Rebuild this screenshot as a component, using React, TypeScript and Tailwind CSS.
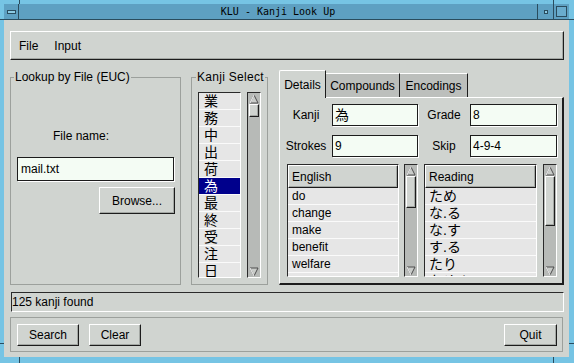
import React from "react";

const sans = "font-['Liberation_Sans','Noto_Sans_CJK_JP',sans-serif]";
const raised =
  "border border-t-white border-l-white border-r-[#1c1c1c] border-b-[#1c1c1c] shadow-[inset_-1px_-1px_0_#a3a7a3]";
const sunken = "border border-t-[#2a2a2a] border-l-[#2a2a2a] border-r-white border-b-white";
const field = "border border-[#1c1c1c] bg-[#f4fcf4] shadow-[1px_1px_0_#ffffff]";
const etched = "border border-[#9ca09c]";

const kanjiList = ["業", "務", "中", "出", "荷", "為", "最", "終", "受", "注", "日"];
const english = ["do", "change", "make", "benefit", "welfare"];
const readings = ["ため", "な.る", "な.す", "す.る", "たり", "ため.に"];

function Arrow({ down }: { down?: boolean }) {
  return (
    <div className="h-[11px] flex items-center justify-center shrink-0">
      <svg width="10" height="10" viewBox="0 0 10 10">
        <polygon
          points={down ? "1,1 9,1 5,9" : "5,1 9,9 1,9"}
          fill="#c9ccc9"
          stroke="#4c4c4c"
          strokeWidth="1"
        />
        <line x1={down ? 1 : 5} y1={1} x2={down ? 5 : 1} y2={9} stroke="#ffffff" strokeWidth="1" />
      </svg>
    </div>
  );
}

function Scrollbar({ thumb }: { thumb: string }) {
  return (
    <div className={`w-[14px] h-full flex flex-col bg-[#b7bab7] ${sunken}`}>
      <Arrow />
      <div className={`${thumb} mx-[1px] shrink-0 bg-[#d0d4d0] ${raised}`} />
      <div className="flex-1" />
      <Arrow down />
    </div>
  );
}

function ListBox({ title, rows, jp }: { title: string; rows: string[]; jp?: boolean }) {
  return (
    <div className={`h-full flex flex-col overflow-hidden bg-[#e6e6e6] ${sunken}`}>
      <div className={`h-[23px] shrink-0 bg-[#d0d4d0] flex items-center pl-[3px] text-[12px] ${raised}`}>{title}</div>
      {rows.map((r, i) => (
        <div
          key={i}
          className={`h-[17px] shrink-0 border-b border-[#fafafa] pl-[4px] flex items-center ${
            jp ? "text-[14px] leading-[17px]" : "text-[12px]"
          }`}
        >
          {r}
        </div>
      ))}
    </div>
  );
}

function Button({ label, w }: { label: string; w: string }) {
  return (
    <div className={`${w} h-[22px] bg-[#d0d4d0] flex items-center justify-center text-[12px] ${raised}`}>
      {label}
    </div>
  );
}

export default function App() {
  return (
    <div
      className={`relative w-[574px] h-[363px] bg-[#76c4e4] pt-[4px] pl-[4px] pr-[5px] pb-[6px] flex flex-col text-black ${sans}`}
    >
      {/* frame handle ticks */}
      <div className="absolute left-[19px] top-0 w-px h-[4px] bg-[#2a4c5e]" />
      <div className="absolute left-[553px] top-0 w-px h-[4px] bg-[#2a4c5e]" />
      <div className="absolute left-0 top-[19px] w-[4px] h-px bg-[#2a4c5e]" />
      <div className="absolute right-0 top-[19px] w-[5px] h-px bg-[#2a4c5e]" />
      <div className="absolute left-[19px] bottom-0 w-px h-[6px] bg-[#2a4c5e]" />
      <div className="absolute left-[553px] bottom-0 w-px h-[6px] bg-[#2a4c5e]" />
      <div className="absolute left-0 top-[343px] w-[4px] h-px bg-[#2a4c5e]" />
      <div className="absolute right-0 top-[343px] w-[5px] h-px bg-[#2a4c5e]" />

      {/* title bar */}
      <div className="h-[16px] shrink-0 flex bg-[#5ea0c2] border-b border-[#2a4c5e]">
        <div className="w-[15px] border-r border-[#2a4c5e] flex items-center justify-center">
          <div className="w-[9px] h-[4px] border border-[#2a4c5e] bg-[#8ccbe4]" />
        </div>
        <div className="flex-1 text-center font-['DejaVu_Sans_Mono',monospace] text-[10px] leading-[15px]">
          KLU - Kanji Look Up
        </div>
        <div className="w-[16px] border-l border-[#2a4c5e] flex items-center justify-center">
          <div className="w-[4px] h-[4px] border border-[#2a4c5e] bg-[#8ccbe4]" />
        </div>
        <div className="w-[16px] border-l border-[#2a4c5e] flex items-center justify-center">
          <div className="w-[11px] h-[11px] border border-[#2a4c5e] bg-[#6aaccd]" />
        </div>
      </div>

      {/* client area */}
      <div className="flex-1 bg-[#d0d4d0] flex flex-col pl-[6px] pr-[5px]">
        {/* menu bar */}
        <div className={`mt-[11px] h-[29px] w-[554px] flex items-center pl-[8px] gap-[16px] text-[12px] ${raised}`}>
          <span>File</span>
          <span>Input</span>
        </div>

        {/* middle row */}
        <div className="mt-[10px] h-[215px] flex">
          {/* Lookup by file */}
          <fieldset className={`w-[171px] h-[215px] ${etched} flex flex-col`}>
            <legend className="ml-[3px] px-[1px] text-[12px] leading-[14px]">Lookup by File (EUC)</legend>
            <div className="mt-[45px] ml-[42px] text-[12px] leading-[14px]">File name:</div>
            <div className={`mt-[14px] ml-[6px] w-[157px] h-[24px] flex items-center pl-[3px] text-[12px] ${field}`}>
              mail.txt
            </div>
            <div className="mt-[6px] mr-[5px] self-end">
              <Button label="Browse..." w="w-[76px] h-[27px]" />
            </div>
          </fieldset>

          {/* Kanji select */}
          <fieldset className={`ml-[10px] w-[77px] h-[215px] ${etched}`}>
            <legend className="ml-[4px] px-[1px] text-[12px] leading-[14px] tracking-[0.3px]">Kanji Select</legend>
            <div className="mt-[8px] ml-[6px] h-[186px] flex gap-[6px]">
              <div className={`w-[43px] h-full overflow-hidden bg-[#e6e6e6] ${sunken}`}>
                {kanjiList.map((k) => (
                  <div
                    key={k}
                    className={`h-[17px] border-b border-[#fafafa] pl-[5px] text-[14px] leading-[16px] ${
                      k === "為" ? "bg-[#00008c] text-white" : ""
                    }`}
                  >
                    {k}
                  </div>
                ))}
              </div>
              <Scrollbar thumb="h-[13px]" />
            </div>
          </fieldset>

          {/* Tabs */}
          <div className="ml-[11px] w-[285px] h-[215px] flex flex-col">
            <div className="h-[27px] flex items-end text-[12px]">
              <div className="relative z-10 h-[28px] -mb-px w-[47px] bg-[#d0d4d0] border-t border-l border-t-white border-l-white border-r border-r-[#1c1c1c] rounded-tl-[2px] flex items-center justify-center">
                Details
              </div>
              <div className="h-[24px] w-[74px] bg-[#bcbfbc] border-t border-t-white border-r border-r-[#1c1c1c] flex items-center justify-center">
                Compounds
              </div>
              <div className="h-[24px] w-[68px] bg-[#bcbfbc] border-t border-t-white border-r border-r-[#1c1c1c] flex items-center justify-center">
                Encodings
              </div>
            </div>
            <div className="h-[188px] border-t border-l border-t-white border-l-white border-r-2 border-b-2 border-r-[#1c1c1c] border-b-[#1c1c1c] flex flex-col text-[12px]">
              <div className="mt-[6px] h-[22px] flex items-center">
                <div className="w-[52px] text-center">Kanji</div>
                <div className={`w-[86px] h-full flex items-center pl-[2px] text-[14px] ${field}`}>為</div>
                <div className="w-[52px] text-center">Grade</div>
                <div className={`w-[87px] h-full flex items-center pl-[2px] ${field}`}>8</div>
              </div>
              <div className="mt-[9px] h-[22px] flex items-center">
                <div className="w-[52px] text-center">Strokes</div>
                <div className={`w-[86px] h-full flex items-center pl-[2px] ${field}`}>9</div>
                <div className="w-[52px] text-center">Skip</div>
                <div className={`w-[87px] h-full flex items-center pl-[2px] ${field}`}>4-9-4</div>
              </div>
              <div className="mt-[7px] ml-[7px] h-[113px] flex">
                <div className="w-[112px] h-full">
                  <ListBox title="English" rows={english} />
                </div>
                <div className="ml-[5px] h-full">
                  <Scrollbar thumb="h-[32px]" />
                </div>
                <div className="ml-[6px] w-[113px] h-full">
                  <ListBox title="Reading" rows={readings} jp />
                </div>
                <div className="ml-[6px] h-full">
                  <Scrollbar thumb="h-[50px]" />
                </div>
              </div>
            </div>
          </div>
        </div>

        {/* status */}
        <div className={`mt-[7px] ml-[1px] w-[553px] h-[20px] flex items-center text-[12px] ${sunken}`}>
          125 kanji found
        </div>

        {/* buttons */}
        <div className={`mt-[5px] w-[553px] h-[35px] flex items-start pt-[6px] pl-[6px] pr-[5px] ${etched}`}>
          <Button label="Search" w="w-[62px]" />
          <div className="ml-[10px]">
            <Button label="Clear" w="w-[52px]" />
          </div>
          <div className="flex-1" />
          <Button label="Quit" w="w-[53px]" />
        </div>
      </div>
    </div>
  );
}
